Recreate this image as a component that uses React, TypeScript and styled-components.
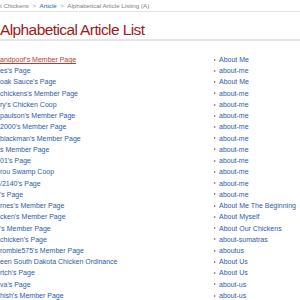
import React from 'react';
import styled, { createGlobalStyle } from 'styled-components';

const GlobalStyle = createGlobalStyle`
  html, body {
    margin: 0;
    padding: 0;
    background: #fff;
    overflow: hidden;
  }
  body {
    font-family: "Liberation Sans", Arial, sans-serif;
  }
`;

const leftLinks = [
  "andpoof's Member Page",
  "es's Page",
  "oak Sauce's Page",
  "chickens's Member Page",
  "ry's Chicken Coop",
  "paulson's Member Page",
  "2000's Member Page",
  "blackman's Member Page",
  "s Member Page",
  "01's Page",
  "rou Swamp Coop",
  "/2140's Page",
  "'s Page",
  "rnes's Member Page",
  "cken's Member Page",
  "'s Member Page",
  "chicken's Page",
  "rombie575's Member Page",
  "een South Dakota Chicken Ordinance",
  "rtch's Page",
  "va's Page",
  "hish's Member Page",
];

const rightLinks = [
  'About Me',
  'about-me',
  'About Me',
  'about-me',
  'about-me',
  'about-me',
  'about-me',
  'about-me',
  'about-me',
  'about-me',
  'about-me',
  'about-me',
  'about-me',
  'About Me The Beginning',
  'About Myself',
  'About Our Chickens',
  'about-sumatras',
  'aboutus',
  'About Us',
  'About Us',
  'about-us',
  'about-us',
];

function App() {
  return (
    <Page>
      <GlobalStyle />
      <Breadcrumb>
        <Crumb>t Chickens</Crumb>
        <Sep>&gt;</Sep>
        <CrumbLink href="#">Article</CrumbLink>
        <Sep>&gt;</Sep>
        <Crumb>Alphabetical Article Listing (A)</Crumb>
      </Breadcrumb>
      <TitleBar>
        <Title>Alphabetical Article List</Title>
      </TitleBar>
      <Columns>
        <List>
          {leftLinks.map((name, i) => (
            <Item key={i}>
              <Link href="#" $active={i === 0}>
                {name}
              </Link>
            </Item>
          ))}
        </List>
        <List>
          {rightLinks.map((name, i) => (
            <BulletItem key={i}>
              <Link href="#">{name}</Link>
            </BulletItem>
          ))}
        </List>
      </Columns>
    </Page>
  );
}

const Page = styled.div`
  width: 300px;
  height: 300px;
  overflow: hidden;
`;

const Breadcrumb = styled.div`
  display: flex;
  align-items: center;
  gap: 3.5px;
  height: 11px;
  border-bottom: 1px solid #e4e4e4;
  font-size: 6.2px;
  color: #808080;
  white-space: nowrap;
`;

const Crumb = styled.span`
  color: #808080;
`;

const Sep = styled.span`
  color: #9a9a9a;
`;

const CrumbLink = styled.a`
  color: #2b5ca8;
  text-decoration: none;
`;

const TitleBar = styled.div`
  height: 27px;
  border-bottom: 2px solid #e6e6e6;
  display: flex;
  align-items: flex-end;
`;

const Title = styled.h1`
  margin: 0 0 1px 0;
  font-size: 15.5px;
  font-weight: normal;
  letter-spacing: -0.6px;
  line-height: 17px;
  color: #a31818;
  white-space: nowrap;
`;

const Columns = styled.div`
  display: grid;
  grid-template-columns: 212px 1fr;
  padding-top: 13px;
`;

const List = styled.ul`
  list-style: none;
  margin: 0;
  padding: 0;
  font-size: 7px;
  line-height: 11.24px;
`;

const Item = styled.li`
  white-space: nowrap;
`;

const BulletItem = styled.li`
  white-space: nowrap;
  display: flex;
  align-items: center;

  &::before {
    content: '';
    display: block;
    width: 0;
    height: 0;
    margin: 0 3px 0 2px;
    border-top: 1.5px solid transparent;
    border-bottom: 1.5px solid transparent;
    border-left: 2px solid #8a5b5b;
  }
`;

const Link = styled.a<{ $active?: boolean }>`
  color: ${(p) => (p.$active ? '#c0392b' : '#2b5ca8')};
  text-decoration: ${(p) => (p.$active ? 'underline' : 'none')};
`;

export default App;
